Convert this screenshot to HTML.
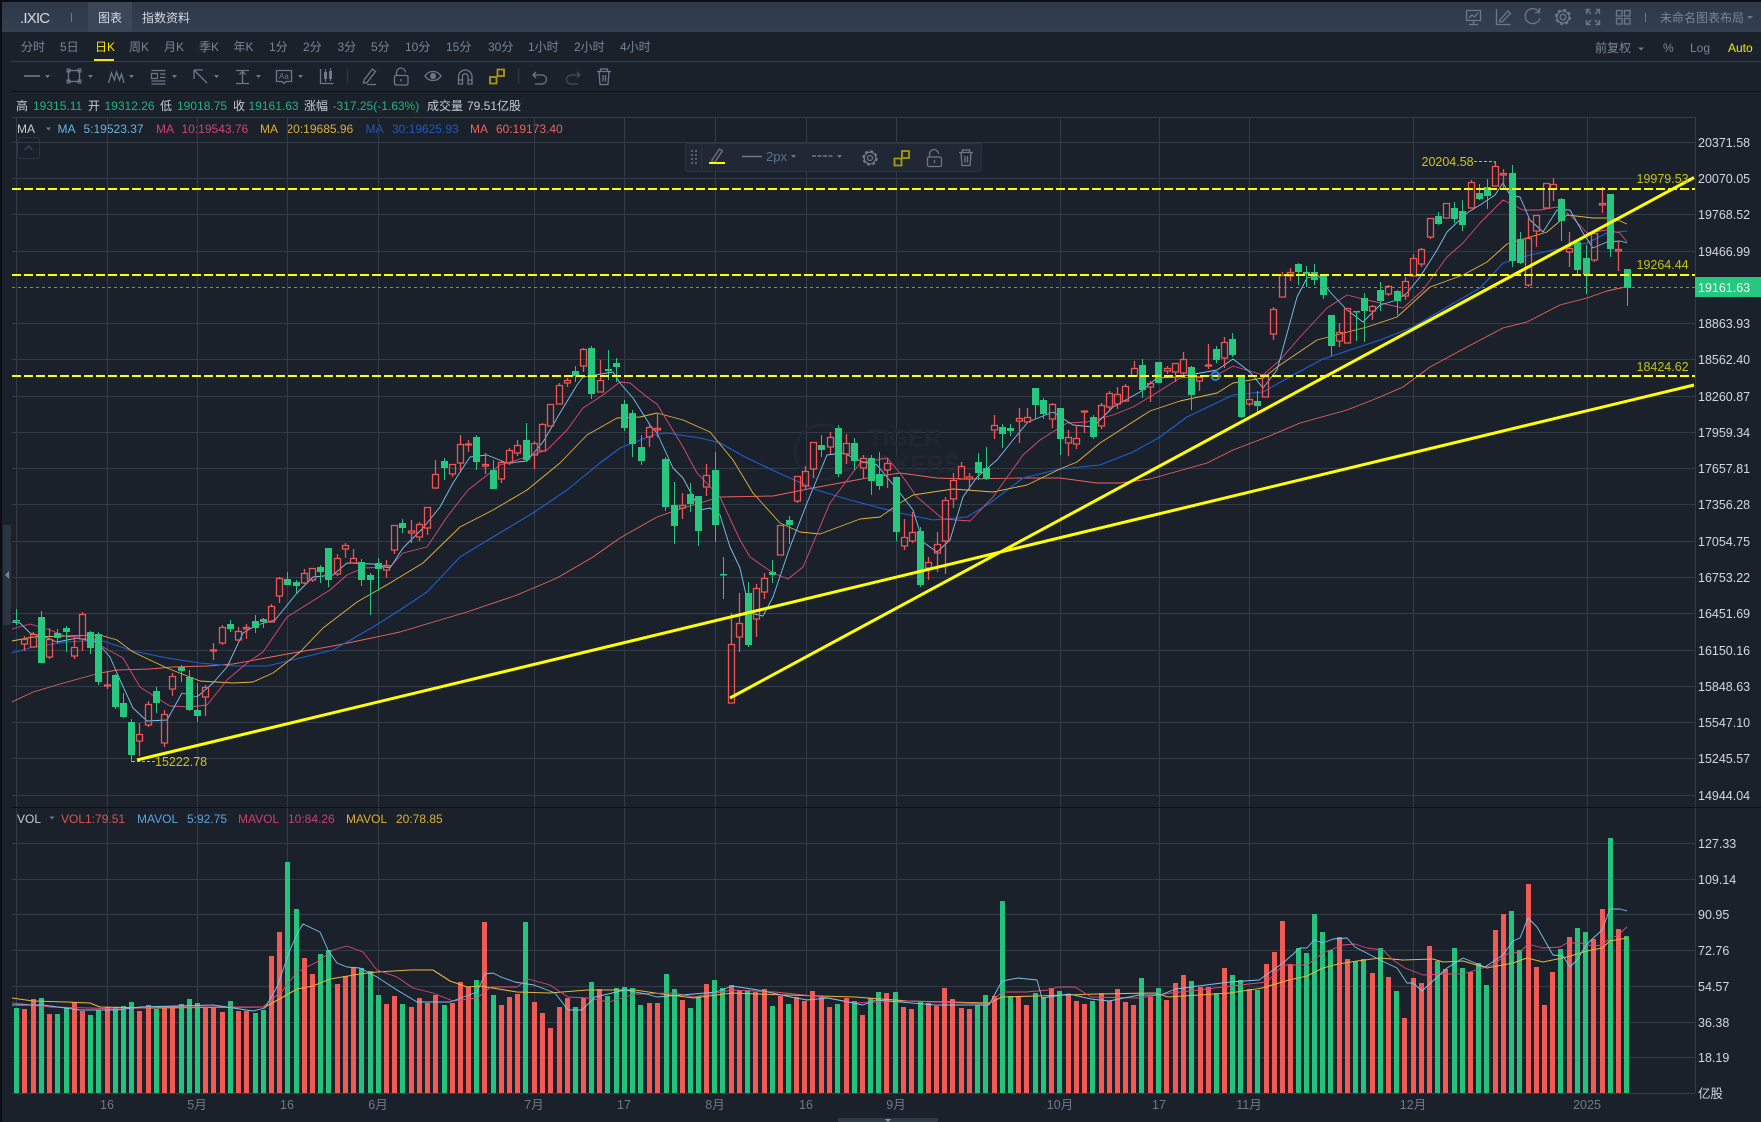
<!DOCTYPE html>
<html lang="zh"><head><meta charset="utf-8"><title>.IXIC</title>
<style>
html,body{margin:0;padding:0;background:#1a212b;overflow:hidden}
svg{display:block;font-family:"Liberation Sans","Noto Sans CJK SC",sans-serif;font-size:12px}
.n{fill:#7a8594}.a{fill:#c5ccd4;font-size:12.5px}.i{fill:#c5ccd4}.g{fill:#25b27a}
.x{fill:#6e7886;font-size:12.5px;text-anchor:middle}
.y{fill:#d0c21a;font-size:12.5px}
.ic{fill:none;stroke:#6d7887;stroke-width:1.3}
.c{fill:#6d7887}
</style></head><body>
<svg width="1761" height="1122" viewBox="0 0 1761 1122" xmlns="http://www.w3.org/2000/svg">
<defs><linearGradient id="hd" x1="0" y1="0" x2="0" y2="1"><stop offset="0" stop-color="#2d3848"/><stop offset="1" stop-color="#344051"/></linearGradient></defs>
<rect width="1761" height="1122" fill="#1a212b"/>
<!-- header -->
<rect x="0" y="2" width="1761" height="30" fill="url(#hd)"/>
<rect x="88" y="2" width="44" height="30" fill="#3b4658"/>
<rect width="1761" height="2" fill="#0b0e12"/>
<rect width="2" height="1122" fill="#0b0e12"/>
<text x="20" y="23" fill="#d5dae0" font-size="15" letter-spacing="-.8">.IXIC</text>
<path d="M71.5 13v9" stroke="#6d7887"/>
<text x="98" y="22" fill="#d5dae0">图表</text>
<text x="142" y="22" fill="#d5dae0">指数资料</text>
<!-- header right icons -->
<g class="ic">
<path d="M1466.5 10.5h14v10h-14zM1473.5 21v3M1469 24.500h9M1469 18l3-3 2.500 2 3.500-4"/>
<path d="M1496.500 9v15.500h14M1500 20l8-9 2.500 2.500-8 8-3 .5z"/>
<path d="M1539 12a7.500 7.500 0 1 0 1 6M1539.500 8v4.500h-4.500"/>
<circle cx="1563" cy="17" r="2.800"/><circle cx="1563" cy="17" r="6"/><circle cx="1563" cy="17" r="7.200" stroke-width="1.800" stroke-dasharray="3 2.650"/>
<path d="M1586.500 14v-4.500h4M1599.500 14v-4.500h-4M1586.500 20v4.500h4M1599.500 20v4.500h-4M1587 10l4 4M1599 10l-4 4M1587 24l4-4M1599 24l-4-4"/>
<path d="M1616.500 10.500h5.500v5.500h-5.500zM1624.500 10.500h5.500v5.500h-5.500zM1616.500 18.500h5.500v5.500h-5.500zM1624.500 18.500h5.500v5.500h-5.500z"/>
</g>
<path d="M1645.500 13v9" stroke="#6d7887"/>
<text x="1660" y="22" class="n">未命名图表布局</text>
<path class="c" d="M1747 16h6l-3 3z"/>
<!-- timeframes -->
<g class="n">
<text x="21" y="51">分时</text><text x="60" y="51">5日</text>
<text x="129" y="51">周K</text><text x="164" y="51">月K</text><text x="199" y="51">季K</text><text x="233.500" y="51">年K</text>
<text x="269" y="51">1分</text><text x="303" y="51">2分</text><text x="337.500" y="51">3分</text><text x="371" y="51">5分</text>
<text x="405" y="51">10分</text><text x="446" y="51">15分</text><text x="488" y="51">30分</text>
<text x="528" y="51">1小时</text><text x="574" y="51">2小时</text><text x="620" y="51">4小时</text>
<text x="1595" y="52">前复权</text><text x="1663" y="52">%</text><text x="1690" y="52">Log</text>
</g>
<text x="95" y="51" fill="#f5e60a">日K</text>
<rect x="94" y="59" width="20" height="2" fill="#f5e60a"/>
<text x="1728" y="52" fill="#f5e60a">Auto</text>
<path class="c" d="M1638 47.500h6l-3 3z"/>
<rect x="11" y="61" width="1750" height="1" fill="#323c49"/>
<rect x="11" y="91" width="1750" height="1" fill="#0d1218"/>
<!-- toolbar icons -->
<g class="ic">
<path d="M24 76h16" stroke-width="1.600"/>
<path d="M68.500 70.500h11v11h-11z"/><path d="M67 69h3v3h-3zM78 69h3v3h-3zM67 80h3v3h-3zM78 80h3v3h-3z" stroke-width="1"/>
<path d="M108.500 83l3-10 3 7 2-8 3 8 2-6 2.500 9"/>
<path d="M151.500 70.500h14M151.500 73.500v5h6v-5zM160 74h5.500M160 77.500h5.500M151.500 81h14M151.500 84h14" stroke-width="1.200"/>
<path d="M194 70l13 13M194 70h9M194 70v9"/>
<path d="M236 70.500h13M242.500 71v12M236 83.500h13M239.500 74.500l3-3 3 3"/>
<path d="M276.500 70.500h15v11h-5.500l-2 2-2-2h-5.500z"/>
<path d="M320.500 69v14.500h13"/>
<path d="M347.500 68v16M518.500 68v16" stroke="#2c3541"/>
<path d="M364 80l8.500-11 3 2.500-8.500 11-3.500.5zM367 84.500h9"/>
<rect x="394.500" y="75.500" width="13.500" height="9.500" rx="1.500"/><path d="M396.500 75.500v-3a4.500 4.500 0 0 1 9 0M401 79v2.500"/>
<path d="M425 76c4-6 12-6 16 0c-4 6-12 6-16 0z"/>
<path d="M458.500 84v-8a6.800 6.800 0 0 1 13.500 0v8h-4v-8a2.800 2.800 0 0 0-5.500 0v8zM458.500 80h4M468 80h4"/>
<path d="M536 72l-3 3 3 3M533 75h9a4.500 4.500 0 0 1 0 9h-7"/>
<path d="M577 72l3 3-3 3M580 75h-9a4.500 4.500 0 0 0 0 9h7" stroke="#444e5b"/>
<path d="M597 71.500h14M600.500 71v-2h7v2M599 71.500l1 13h8l1-13M603 75v6.500M605.500 75v6.500"/>
</g>
<path class="c" d="M324 72h3v7h-3zM329 71h3v8h-3zM325 69h1v13h-1zM330 68h1v13h-1z"/>
<circle class="c" cx="433" cy="76" r="3"/>
<text x="279" y="79" font-size="8" fill="#6d7887">Aa</text>
<path d="M497.500 69.500h6.500v6.500h-6.500zM490 77h6.500v6.500h-6.500z" fill="none" stroke="#a89c0c" stroke-width="1.800"/>
<path class="c" d="M45 75h5l-2.500 3zM88 75h5l-2.500 3zM129 75h5l-2.500 3zM172 75h5l-2.500 3zM214 75h5l-2.500 3zM256 75h5l-2.500 3zM298 75h5l-2.500 3z"/>
<!-- info rows -->
<g class="i"><text x="16" y="110">高</text><text x="88" y="110">开</text><text x="160" y="110">低</text><text x="233" y="110">收</text><text x="304" y="110">涨幅</text><text x="427" y="110">成交量</text><text x="467" y="110">79.51亿股</text><text x="17" y="133">MA</text></g>
<g class="g"><text x="33" y="110">19315.11</text><text x="104.500" y="110">19312.26</text><text x="177" y="110">19018.75</text><text x="248.500" y="110">19161.63</text><text x="332.500" y="110">-317.25(-1.63%)</text></g>
<path class="c" d="M46 127.500h5l-2.500 3z"/>
<text x="57.500" y="133" fill="#69b3e2">MA</text><text x="83.500" y="133" fill="#69b3e2">5:19523.37</text>
<text x="156" y="133" fill="#cf4272">MA</text><text x="181.500" y="133" fill="#cf4272">10:19543.76</text>
<text x="260" y="133" fill="#dcae38">MA</text><text x="286.500" y="133" fill="#dcae38">20:19685.96</text>
<text x="365.500" y="133" fill="#2058c0">MA</text><text x="392" y="133" fill="#2058c0">30:19625.93</text>
<text x="470" y="133" fill="#e9635c">MA</text><text x="496" y="133" fill="#e9635c">60:19173.40</text>
<!-- grid -->
<path fill="none" stroke="#323c49" d="M12 117.500H1695M12 142.500H1695M12 178.500H1695M12 214.500H1695M12 251.500H1695M12 323.500H1695M12 359.500H1695M12 396.500H1695M12 432.500H1695M12 468.500H1695M12 504.500H1695M12 541.500H1695M12 577.500H1695M12 613.500H1695M12 650.500H1695M12 686.500H1695M12 722.500H1695M12 758.500H1695M12 795.500H1695M12 843.500H1695M12 879.500H1695M12 914.500H1695M12 950.500H1695M12 986.500H1695M12 1022.500H1695M12 1057.500H1695M12 1093.500H1695M16.500 117V1093M107.500 117V1093M197.500 117V1093M287.500 117V1093M378.500 117V1093M534.500 117V1093M624.500 117V1093M715.500 117V1093M806.500 117V1093M896.500 117V1093M1060.500 117V1093M1159.500 117V1093M1249.500 117V1093M1413.500 117V1093M1587.500 117V1093M1695.500 117V1093"/>
<rect x="11" y="807" width="1750" height="1" fill="#0d1218"/>
<!-- left handle, collapse -->
<rect x="3" y="525" width="8" height="100" fill="#2b3440"/>
<path d="M9 571v8l-4-4z" fill="#7a8594"/>
<rect x="17.500" y="137.500" width="22" height="21" rx="3" fill="none" stroke="#2b3440"/>
<path d="M24.500 150l4-4 4 4" fill="none" stroke="#3d4755" stroke-width="1.300"/>
<!-- watermark -->
<circle cx="822" cy="452" r="27" fill="none" stroke="#1f2731" stroke-width="3"/>
<text x="868" y="446" font-size="24" font-weight="700" fill="#1f2731">TIGER</text>
<text x="840" y="472" font-size="24" font-weight="700" fill="#1f2731">BROKERS</text>
<!-- MA lines -->
<g fill="none" stroke-width=".9" stroke-linejoin="round">
<polyline stroke="#ee645c" points="12,702 33,692 67,682 100,673 117,670 150,669 173,667 207,666 233,664 260,659 293,653 333,646 367,639 400,632 430,623 467,612 517,595 557,578 593,557 620,538 657,517 683,508 720,497 773,496 813,488 867,478 900,473 937,478 967,479 1023,478 1060,478 1097,483 1120,483 1150,479 1207,463 1233,450 1267,437 1300,423 1347,410 1380,397 1403,387 1430,367 1467,347 1503,328 1527,322 1560,305 1587,298 1607,291 1625,287"/>
<polyline stroke="#1f5fd0" stroke-width="1.100" points="12,653 33,647 67,642 100,640 133,651 167,658 200,663 233,666 267,666 300,658 333,650 373,627 400,610 427,592 460,557 493,537 533,513 567,490 600,463 620,448 653,435 667,433 700,438 720,443 747,458 783,475 817,490 850,500 873,506 900,513 933,520 967,517 990,503 1023,478 1060,469 1100,465 1133,452 1160,437 1187,417 1233,395 1263,392 1293,375 1323,359 1380,340 1413,327 1447,307 1480,288 1503,263 1530,255 1563,248 1587,243 1607,233 1627,231"/>
<polyline stroke="#e8b33c" points="12,641 33,637 67,636 100,635 117,640 133,652 167,668 200,681 233,683 253,682 273,673 300,652 323,628 357,602 390,583 423,563 460,527 493,510 527,490 560,463 587,435 617,418 640,417 657,413 683,420 710,432 733,460 753,493 780,523 800,532 820,534 860,519 880,517 900,503 913,495 953,489 993,492 1027,485 1060,469 1077,462 1100,443 1150,411 1180,401 1217,393 1233,383 1263,378 1280,365 1317,340 1367,327 1397,317 1430,287 1463,275 1487,262 1507,244 1547,232 1567,215 1593,218 1613,218 1627,224"/>
<polyline stroke="#dc4a78" points="12,629 30,624 50,630 67,637 90,635 103,647 123,658 140,687 157,698 170,706 190,707 207,705 227,680 247,663 263,652 287,617 303,607 330,590 347,575 363,568 390,567 403,553 427,547 447,517 468,490 500,465 517,460 547,450 567,430 583,408 603,395 620,382 630,383 647,397 657,404 683,447 697,473 720,497 740,540 750,557 773,573 788,579 803,567 830,503 860,463 887,458 900,473 917,497 943,519 970,521 993,497 1023,455 1040,440 1067,423 1087,422 1113,415 1133,407 1153,395 1180,378 1217,375 1233,366 1263,375 1280,360 1300,337 1327,308 1347,295 1367,300 1403,308 1423,290 1447,257 1463,243 1480,223 1503,200 1523,210 1540,210 1557,207 1570,215 1587,233 1607,230 1620,233 1627,242"/>
<polyline stroke="#7cc4ee" points="12,622 20,623 30,633 47,638 57,642 77,638 97,642 110,657 120,680 133,708 147,721 167,720 182,693 197,697 213,683 227,667 243,633 257,625 275,620 297,593 313,577 333,575 347,563 373,564 390,568 403,548 423,528 440,507 453,483 470,457 487,455 507,463 527,461 543,442 560,413 577,385 583,377 613,372 620,383 633,398 650,425 657,433 673,468 683,478 700,510 710,508 720,515 730,547 740,568 750,613 763,616 773,597 790,547 807,503 827,455 843,453 863,462 877,465 900,493 913,510 923,542 937,552 950,540 963,497 977,477 997,460 1013,440 1028,422 1053,412 1073,425 1093,427 1113,407 1140,392 1157,378 1177,377 1200,373 1217,370 1233,359 1250,372 1263,388 1277,370 1288,330 1297,297 1307,278 1318,275 1330,292 1347,310 1363,322 1380,305 1397,300 1407,293 1420,277 1437,250 1447,232 1467,213 1480,205 1495,195 1503,183 1510,195 1520,197 1530,220 1543,232 1557,210 1570,210 1583,233 1593,248 1607,242 1620,241 1627,243"/>
</g>
<!-- green wicks -->
<path fill="none" stroke="#27c77f" stroke-width="1" d="M16.500 609V625M41.500 611V663M57.500 629V643M66.500 626V652M90.500 631V654M98.500 632V685M115.500 674V709M123.500 693V718M131.500 719V762M156.500 687V713M181.500 665V682M189.500 670V711M197.500 683V722M230.500 620V632M255.500 615V633M263.500 618V628M287.500 572V585M296.500 580V594M320.500 565V583M328.500 548V587M361.500 559V586M370.500 573V615M378.500 558V591M402.500 519V533M444.500 458V480M476.500 435V470M493.500 460V489M526.500 423V462M575.500 366V382M591.500 346V399M608.500 350V380M616.500 358V382M624.500 400V431M632.500 410V457M641.500 435V465M665.500 457V511M674.500 482V544M690.500 483V512M698.500 496V546M715.500 452V542M723.500 557V599M748.500 582V647M772.500 560V583M789.500 516V544M821.500 435V457M838.500 425V477M854.500 438V470M871.500 455V495M879.500 452V490M896.500 477V541M920.500 527V587M978.500 453V480M986.500 447V480M1002.500 424V448M1010.500 424V436M1035.500 388V419M1043.500 398V419M1060.500 408V455M1093.500 415V439M1142.500 359V398M1158.500 362V383M1191.500 366V410M1216.500 346V363M1232.500 333V357M1241.500 377V418M1257.500 391V412M1298.500 263V285M1306.500 266V287M1314.500 264V285M1323.500 276V299M1331.500 315V356M1356.500 311V341M1364.500 293V342M1380.500 282V311M1397.500 290V315M1438.500 212V225M1454.500 202V223M1462.500 200V231M1479.500 184V200M1487.500 179V209M1512.500 165V267M1520.500 232V264M1561.500 198V241M1577.500 242V274M1586.500 245V294M1610.500 194V257M1627.500 269V306"/>
<!-- green bodies -->
<path fill="none" stroke="#27c77f" stroke-width="7" d="M16.500 620V621.500M41.500 617V663M57.500 633V638M66.500 628V632M90.500 632V648M98.500 634V682M115.500 675V707M123.500 703V717M131.500 722V755M156.500 691V703M181.500 667V671M189.500 677V710M197.500 710V716M230.500 624V629M255.500 621V628M263.500 619V622M287.500 579V585M296.500 582V586M320.500 567V572M328.500 548V580M361.500 562V580M370.500 575V580M378.500 563V569M402.500 523V528M444.500 461V468M476.500 437V462M493.500 470V489M526.500 440V460M575.500 371V376M591.500 348V394M608.500 369V371M616.500 363V367M624.500 404V428M632.500 413V444M641.500 447V461M665.500 459V507M674.500 505V526M690.500 494V504M698.500 496V531M715.500 470V525M723.500 574V575.500M748.500 593V645M772.500 572V575M789.500 520V525M821.500 445V450M838.500 428V474M854.500 443V461M871.500 458V481M879.500 474V486M896.500 477V532M920.500 531V585M978.500 462V473M986.500 468V479M1002.500 427V434M1010.500 428V431M1035.500 388V405M1043.500 400V414M1060.500 408V439M1093.500 417V437M1142.500 365V390M1158.500 362V383M1191.500 367V395M1216.500 349V360M1232.500 339V355M1241.500 377V417M1257.500 401V406M1298.500 264V272M1306.500 272V274M1314.500 272V280M1323.500 276V295M1331.500 315V346M1356.500 311V312.500M1364.500 298V311M1380.500 290V301M1397.500 291V301M1438.500 216V224M1454.500 208V219M1462.500 211V225M1479.500 193V199M1487.500 187V196M1512.500 173V261M1520.500 239V263M1561.500 199V221M1577.500 242V270M1586.500 258V275M1610.500 194V249M1627.500 269V288"/>
<!-- red candles -->
<path fill="none" stroke="#f05555" stroke-width="1.300" d="M24.500 636V639M24.500 644V651M21.500 639.500h6v4.500h-6zM33.500 632V634M30.500 634.500h6v12.500h-6zM49.500 628V639M49.500 657V659M46.500 639.500h6v17.500h-6zM74.500 637V647M74.500 656V659M71.500 647.500h6v8.500h-6zM82.500 612V614M82.500 639V651M79.500 614.500h6v24.500h-6zM107.500 672V685M107.500 686V689M104.500 685h6v1h-6zM139.500 723V734M139.500 741V756M136.500 734.500h6v6.500h-6zM148.500 701V704M148.500 725V727M145.500 704.500h6v20.500h-6zM164.500 710V714M164.500 743V747M161.500 714.500h6v28.500h-6zM172.500 673V676M172.500 689V696M169.500 676.500h6v12.500h-6zM205.500 685V687M205.500 697V716M202.500 687.500h6v9.500h-6zM213.500 643V650M213.500 651V660M210.500 650h6v1h-6zM222.500 625V627M222.500 643V645M219.500 627.500h6v15.500h-6zM238.500 627V631M238.500 640V641M235.500 631.500h6v8.500h-6zM246.500 624V627M246.500 629V639M243.500 627.500h6v1.500h-6zM271.500 604V606M268.500 606.500h6v15.500h-6zM279.500 577V578M279.500 596V603M276.500 578.500h6v17.500h-6zM304.500 569V573M304.500 583V584M301.500 573.500h6v9.500h-6zM309.500 568.500h6v11.500h-6zM312.500 580V582M337.500 554V558M337.500 574V576M334.500 558.500h6v15.500h-6zM345.500 543V545M345.500 549V558M342.500 545.500h6v3.500h-6zM353.500 549V558M350.500 558.500h6v4.500h-6zM386.500 560V565M386.500 570V578M383.500 565.500h6v4.500h-6zM391.500 525.500h6v24.500h-6zM394.500 550V554M411.500 520V531M411.500 533V543M408.500 531h6v2h-6zM419.500 522V524M419.500 537V541M416.500 524.500h6v12.500h-6zM424.500 507.500h6v20.500h-6zM427.500 528V535M435.500 460V474M435.500 488V489M432.500 474.500h6v13.500h-6zM449.500 464.500h6v9.500h-6zM452.500 474V477M460.500 435V444M460.500 463V471M457.500 444.500h6v18.500h-6zM468.500 440V444M468.500 445V452M465.500 444h6v1h-6zM485.500 453V464M485.500 466V474M482.500 464.500h6v1.500h-6zM501.500 460V462M501.500 479V483M498.500 462.500h6v16.500h-6zM509.500 448V450M509.500 463V465M506.500 450.500h6v12.500h-6zM517.500 440V445M517.500 453V456M514.500 445.500h6v7.500h-6zM534.500 441V443M534.500 455V469M531.500 443.500h6v11.500h-6zM542.500 423V424M542.500 451V452M539.500 424.500h6v26.500h-6zM547.500 404.500h6v21.500h-6zM559.500 383V385M556.500 385.500h6v18.500h-6zM567.500 378V380M567.500 383V387M564.500 380.500h6v2.500h-6zM583.500 348V349M583.500 366V372M580.500 349.500h6v16.500h-6zM600.500 360V380M597.500 380.500h6v11.500h-6zM649.500 423V427M649.500 437V447M646.500 427.500h6v9.500h-6zM657.500 413V428M657.500 430V437M654.500 428.500h6v1.500h-6zM682.500 493V505M682.500 508V519M679.500 505.500h6v2.500h-6zM706.500 464V475M706.500 487V496M703.500 475.500h6v11.500h-6zM731.500 613V644M728.500 644.500h6v58.500h-6zM739.500 593V623M739.500 637V652M736.500 623.500h6v13.500h-6zM756.500 584V588M756.500 619V637M753.500 588.500h6v30.500h-6zM764.500 573V578M764.500 592V599M761.500 578.500h6v13.500h-6zM777.500 525.500h6v29.500h-6zM794.500 476.500h6v24.500h-6zM797.500 501V503M805.500 466V471M805.500 486V490M802.500 471.500h6v14.500h-6zM810.500 442.500h6v26.500h-6zM813.500 469V478M830.500 432V437M830.500 447V454M827.500 437.500h6v9.500h-6zM846.500 434V443M846.500 454V464M843.500 443.500h6v10.500h-6zM863.500 455V458M863.500 468V479M860.500 458.500h6v9.500h-6zM887.500 458V463M887.500 470V488M884.500 463.500h6v6.500h-6zM904.500 519V537M904.500 546V550M901.500 537.500h6v8.500h-6zM912.500 512V532M912.500 541V543M909.500 532.500h6v8.500h-6zM928.500 557V562M928.500 568V580M925.500 562.500h6v5.500h-6zM937.500 532V544M937.500 553V572M934.500 544.500h6v8.500h-6zM945.500 497V500M945.500 541V574M942.500 500.500h6v40.500h-6zM953.500 473V480M953.500 499V508M950.500 480.500h6v18.500h-6zM961.500 462V466M958.500 466.500h6v12.500h-6zM969.500 473V477M969.500 479V490M966.500 477h6v2h-6zM994.500 415V425M994.500 430V439M991.500 425.500h6v4.500h-6zM1019.500 408V418M1019.500 421V443M1016.500 418.500h6v2.500h-6zM1027.500 408V417M1024.500 417.500h6v4.500h-6zM1052.500 403V404M1052.500 419V428M1049.500 404.500h6v14.500h-6zM1068.500 430V437M1068.500 443V456M1065.500 437.500h6v5.500h-6zM1076.500 425V438M1076.500 444V449M1073.500 438.500h6v5.500h-6zM1084.500 412V433M1081.500 411h6v1h-6zM1101.500 403V405M1101.500 426V429M1098.500 405.500h6v20.500h-6zM1109.500 391V393M1109.500 407V412M1106.500 393.500h6v13.500h-6zM1117.500 387V394M1117.500 404V409M1114.500 394.500h6v9.500h-6zM1125.500 384V386M1125.500 401V402M1122.500 386.500h6v14.500h-6zM1134.500 361V368M1131.500 368.500h6v7.500h-6zM1150.500 381V383M1150.500 387V402M1147.500 383.500h6v3.500h-6zM1167.500 366V368M1167.500 371V374M1164.500 368.500h6v2.500h-6zM1172.500 363.500h6v8.500h-6zM1175.500 372V382M1183.500 352V359M1183.500 373V377M1180.500 359.500h6v13.500h-6zM1196.500 377.500h6v3.500h-6zM1199.500 381V391M1208.500 344V365M1208.500 366V369M1205.500 365h6v1h-6zM1224.500 337V342M1224.500 358V368M1221.500 342.500h6v15.500h-6zM1249.500 383V399M1249.500 404V406M1246.500 399.500h6v4.500h-6zM1265.500 374V375M1262.500 375.500h6v21.500h-6zM1273.500 307V309M1273.500 334V340M1270.500 309.500h6v24.500h-6zM1282.500 272V275M1279.500 275.500h6v21.500h-6zM1290.500 268V272M1290.500 276V281M1287.500 272.500h6v3.500h-6zM1339.500 323V332M1339.500 341V347M1336.500 332.500h6v8.500h-6zM1344.500 308.500h6v34.500h-6zM1372.500 305V306M1372.500 311V320M1369.500 306.500h6v4.500h-6zM1388.500 285V286M1388.500 294V296M1385.500 286.500h6v7.500h-6zM1405.500 277V281M1405.500 296V300M1402.500 281.500h6v14.500h-6zM1413.500 254V258M1410.500 258.500h6v17.500h-6zM1421.500 248V249M1421.500 264V267M1418.500 249.500h6v14.500h-6zM1427.500 218.500h6v18.500h-6zM1430.500 237V239M1443.500 203.500h6v14.500h-6zM1471.500 180V182M1468.500 182.500h6v25.500h-6zM1495.500 162V166M1492.500 166.500h6v19.500h-6zM1503.500 169V173M1503.500 175V190M1500.500 173.500h6v1.500h-6zM1528.500 217V238M1528.500 285V287M1525.500 238.500h6v46.500h-6zM1533.500 215.500h6v15.500h-6zM1536.500 231V247M1543.500 183.500h6v24.500h-6zM1553.500 178V184M1553.500 189V201M1550.500 184.500h6v4.500h-6zM1569.500 232V248M1569.500 252V267M1566.500 248.500h6v3.500h-6zM1591.500 233.500h6v26.500h-6zM1594.500 260V262M1602.500 187V203M1602.500 205V213M1599.500 203.500h6v1.500h-6zM1618.500 241V249M1618.500 251V271M1615.500 249.500h6v1.500h-6z"/>
<!-- horizontal drawings -->
<path d="M12 287.500H1695" stroke="#2fae7c" stroke-dasharray="3 3"/>
<path d="M12 189H1695M12 275H1695M12 376H1695" stroke="#ffff00" stroke-width="2" stroke-dasharray="9 3"/>
<path d="M137 760L1694 385M730 698L1694 177.500" stroke="#ffff00" stroke-width="3" fill="none"/>
<circle cx="1215.500" cy="376" r="4" fill="none" stroke="#2f80d0" stroke-width="2"/>
<path d="M1474 161.500H1495V166M132 761.500H155" stroke="#d0c21a" stroke-dasharray="3 2" fill="none"/>
<text x="1421.500" y="166" class="y">20204.58</text>
<text x="155" y="766" class="y">15222.78</text>
<text x="1636.500" y="183" class="y" style="fill:#c2c21a">19979.53</text>
<text x="1636.500" y="269" class="y" style="fill:#c2c21a">19264.44</text>
<text x="1636.500" y="371" class="y" style="fill:#c2c21a">18424.62</text>
<!-- floating toolbar -->
<rect x="685.500" y="143.500" width="296" height="28" rx="2" fill="#1f2833" stroke="#2a3340"/>
<path d="M701.500 144v27" stroke="#2a3340"/>
<path fill="#566170" d="M691 150h2v2h-2zM695 150h2v2h-2zM691 154h2v2h-2zM695 154h2v2h-2zM691 158h2v2h-2zM695 158h2v2h-2zM691 162h2v2h-2zM695 162h2v2h-2z"/>
<g class="ic" stroke="#6d7887">
<path d="M712 160l7.500-11 2.800 2-7.500 11-3 .5z"/>
<path d="M742 156.500h20" stroke-width="1.600"/>
<path d="M812 156h22" stroke-dasharray="4 1.500" stroke-width="1.500"/>
<circle cx="870" cy="158" r="2.500"/><circle cx="870" cy="158" r="5.800"/><circle cx="870" cy="158" r="7" stroke-width="1.600" stroke-dasharray="3 2.500"/>
<rect x="927.500" y="157" width="14" height="9.500" rx="1.500"/><path d="M929.500 157v-3a4.500 4.500 0 0 1 9 0M934.500 160v3"/>
<path d="M959 152.500h14M962.500 152v-2h7v2M961 152.500l1 13h8l1-13M965 156v6.500M967.500 156v6.500"/>
</g>
<rect x="709" y="162" width="16" height="2" fill="#ffff00"/>
<text x="766" y="161" font-size="13" fill="#5a7090">2px</text>
<path class="c" d="M791 155h5l-2.500 3zM837 155h5l-2.500 3z"/>
<path d="M902 151h7v7h-7zM894.500 158.500h7v7h-7z" fill="none" stroke="#a89c0c" stroke-width="1.800"/>
<!-- price tag + axis -->
<rect x="1695" y="277" width="66" height="20" fill="#26c77f"/>
<g fill="#d2d7de" font-size="12.500">
<text x="1698" y="147">20371.58</text><text x="1698" y="183">20070.05</text><text x="1698" y="219">19768.52</text><text x="1698" y="256">19466.99</text>
<text x="1698" y="292" fill="#f2fff8">19161.63</text>
<text x="1698" y="328">18863.93</text><text x="1698" y="364">18562.40</text><text x="1698" y="401">18260.87</text><text x="1698" y="437">17959.34</text><text x="1698" y="473">17657.81</text><text x="1698" y="509">17356.28</text><text x="1698" y="546">17054.75</text><text x="1698" y="582">16753.22</text><text x="1698" y="618">16451.69</text><text x="1698" y="655">16150.16</text><text x="1698" y="691">15848.63</text><text x="1698" y="727">15547.10</text><text x="1698" y="763">15245.57</text><text x="1698" y="800">14944.04</text>
<text x="1698" y="848">127.33</text><text x="1698" y="884">109.14</text><text x="1698" y="919">90.95</text><text x="1698" y="955">72.76</text><text x="1698" y="991">54.57</text><text x="1698" y="1027">36.38</text><text x="1698" y="1062">18.19</text><text x="1698" y="1098">亿股</text>
</g>
<!-- vol legend -->
<text x="17" y="823" class="i">VOL</text>
<path class="c" d="M49.500 816.500h5l-2.500 3z"/>
<text x="61" y="823" fill="#d9584f">VOL1:79.51</text>
<text x="137" y="823" fill="#5aa6dc">MAVOL</text><text x="187" y="823" fill="#5aa6dc">5:92.75</text>
<text x="238" y="823" fill="#c8406c">MAVOL</text><text x="288" y="823" fill="#c8406c">10:84.26</text>
<text x="346" y="823" fill="#dcae38">MAVOL</text><text x="396" y="823" fill="#dcae38">20:78.85</text>
<!-- volume bars -->
<path fill="none" stroke="#24c27c" stroke-width="5" d="M16.500 1008V1093M41.500 998V1093M57.500 1014V1093M66.500 1007V1093M90.500 1015V1093M98.500 1010V1093M115.500 1007V1093M123.500 1006V1093M131.500 1002V1093M156.500 1009V1093M181.500 1004V1093M189.500 999V1093M197.500 1003V1093M230.500 1001V1093M255.500 1013V1093M263.500 1010V1093M287.500 862V1093M296.500 909V1093M320.500 954V1093M328.500 950V1093M361.500 968V1093M370.500 971V1093M378.500 995V1093M402.500 1004V1093M444.500 1005V1093M476.500 980V1093M493.500 995V1093M525.500 922V1093M575.500 1007V1093M591.500 982V1093M607.500 996V1093M616.500 988V1093M624.500 987V1093M632.500 988V1093M640.500 1005V1093M666.500 974V1093M674.500 989V1093M690.500 1008V1093M698.500 996V1093M714.500 980V1093M722.500 988V1093M747.500 990V1093M772.500 1006V1093M788.500 1004V1093M837.500 1004V1093M854.500 1001V1093M870.500 998V1093M878.500 992V1093M895.500 992V1093M920.500 1001V1093M977.500 1005V1093M985.500 995V1093M1002.500 901V1093M1010.500 996V1093M1035.500 993V1093M1043.500 997V1093M1059.500 991V1093M1092.500 1001V1093M1141.500 978V1093M1158.500 988V1093M1191.500 981V1093M1216.500 993V1093M1232.500 975V1093M1240.500 980V1093M1257.500 990V1093M1298.500 948V1093M1306.500 953V1093M1314.500 914V1093M1322.500 932V1093M1330.500 950V1093M1355.500 961V1093M1363.500 959V1093M1380.500 948V1093M1396.500 991V1093M1437.500 961V1093M1454.500 948V1093M1462.500 968V1093M1478.500 963V1093M1486.500 985V1093M1511.500 911V1093M1519.500 950V1093M1560.500 949V1093M1577.500 928V1093M1585.500 932V1093M1610.500 838V1093M1626.500 936V1093"/>
<path fill="none" stroke="#f25a55" stroke-width="5" d="M24.500 1009V1093M33.500 999V1093M49.500 1014V1093M74.500 1002V1093M82.500 1011V1093M107.500 1007V1093M139.500 1011V1093M148.500 1005V1093M164.500 1008V1093M172.500 1008V1093M205.500 1007V1093M213.500 1007V1093M222.500 1012V1093M238.500 1011V1093M246.500 1011V1093M271.500 956V1093M279.500 932V1093M304.500 958V1093M312.500 974V1093M337.500 984V1093M345.500 976V1093M353.500 968V1093M386.500 1004V1093M394.500 996V1093M411.500 1007V1093M419.500 998V1093M427.500 1003V1093M435.500 995V1093M452.500 1003V1093M460.500 982V1093M468.500 987V1093M484.500 922V1093M501.500 1005V1093M509.500 997V1093M517.500 994V1093M534.500 1002V1093M542.500 1013V1093M550.500 1028V1093M559.500 1007V1093M567.500 998V1093M583.500 998V1093M599.500 989V1093M649.500 1003V1093M657.500 1003V1093M682.500 1000V1093M706.500 984V1093M731.500 985V1093M739.500 990V1093M755.500 992V1093M764.500 989V1093M780.500 996V1093M796.500 997V1093M804.500 1001V1093M812.500 991V1093M821.500 996V1093M829.500 1007V1093M846.500 998V1093M862.500 1015V1093M886.500 993V1093M903.500 1007V1093M911.500 1009V1093M928.500 1003V1093M936.500 1006V1093M944.500 988V1093M952.500 999V1093M961.500 1008V1093M969.500 1009V1093M994.500 996V1093M1018.500 996V1093M1026.500 1005V1093M1051.500 988V1093M1068.500 995V1093M1076.500 1001V1093M1084.500 1004V1093M1101.500 993V1093M1109.500 1001V1093M1117.500 989V1093M1125.500 1002V1093M1133.500 1005V1093M1150.500 997V1093M1166.500 1000V1093M1175.500 983V1093M1183.500 975V1093M1200.500 987V1093M1208.500 987V1093M1224.500 968V1093M1249.500 989V1093M1266.500 964V1093M1274.500 952V1093M1282.500 921V1093M1290.500 964V1093M1339.500 937V1093M1347.500 959V1093M1372.500 973V1093M1388.500 977V1093M1404.500 1018V1093M1413.500 978V1093M1421.500 983V1093M1429.500 946V1093M1445.500 969V1093M1470.500 972V1093M1495.500 930V1093M1503.500 914V1093M1528.500 884V1093M1536.500 967V1093M1544.500 1005V1093M1552.500 972V1093M1569.500 937V1093M1593.500 939V1093M1602.500 909V1093M1618.500 929V1093"/>
<!-- volume MA lines -->
<g fill="none" stroke-width=".9" stroke-linejoin="round">
<polyline stroke="#e8b33c" stroke-width="1.100" points="12,998 33,1001 67,1002 90,1003 100,1007 150,1008 265,1007 283,997 297,989 313,986 330,979 360,974 377,972 410,970 433,970 450,981 467,987 480,986 517,992 550,993 587,990 635,990 662,994 694,998 732,993 785,995 855,997 908,1001 989,1003 1002,997 1037,996 1096,994 1155,993 1168,997 1230,993 1262,988 1289,980 1307,976 1323,968 1338,964 1357,961 1380,958 1403,960 1433,959 1443,962 1463,961 1487,968 1513,963 1527,958 1543,962 1567,957 1587,951 1602,948 1610,941 1627,938"/>
<polyline stroke="#dc4a78" points="12,1003 50,1007 90,1008 117,1009 167,1007 263,1007 283,990 297,972 317,962 333,950 347,946 363,952 377,970 397,977 413,988 433,993 453,1001 477,998 491,987 517,987 528,979 550,985 568,997 587,998 609,1002 635,994 673,993 694,997 732,990 775,992 823,997 855,1003 908,1001 989,1004 1002,992 1026,992 1048,990 1058,987 1075,987 1091,997 1139,998 1171,993 1198,990 1240,985 1267,982 1283,965 1307,965 1323,953 1343,945 1355,944 1367,948 1383,950 1393,960 1405,968 1423,975 1443,974 1463,974 1493,965 1507,954 1520,952 1528,944 1543,948 1560,947 1567,943 1580,943 1593,946 1602,945 1610,938 1617,936 1627,927"/>
<polyline stroke="#7cc4ee" points="12,1005 43,1005 80,1010 117,1010 140,1007 213,1005 227,1007 253,1011 265,1008 277,987 290,950 298,932 303,924 320,932 328,950 337,963 347,967 360,968 377,977 397,990 417,1002 450,1002 477,992 485,974 493,973 501,977 515,982 534,985 555,993 568,1010 582,1010 595,997 625,990 646,994 657,997 694,994 716,992 732,986 758,990 791,997 807,1000 828,998 863,1005 876,1000 935,1005 989,1005 1002,981 1018,978 1037,980 1042,998 1069,994 1091,999 1109,1001 1139,995 1160,995 1176,989 1198,986 1230,982 1259,980 1283,963 1300,948 1307,948 1314,940 1323,943 1333,939 1347,938 1355,947 1380,960 1397,968 1407,983 1413,983 1422,991 1447,968 1463,958 1485,967 1503,955 1513,941 1520,938 1528,918 1537,927 1553,955 1563,956 1570,967 1577,960 1587,944 1602,930 1610,909 1620,909 1627,911"/>
</g>
<!-- x axis -->
<text x="107" y="1109" class="x">16</text><text x="197" y="1109" class="x">5月</text><text x="287" y="1109" class="x">16</text><text x="378" y="1109" class="x">6月</text><text x="534" y="1109" class="x">7月</text><text x="624" y="1109" class="x">17</text><text x="715" y="1109" class="x">8月</text><text x="806" y="1109" class="x">16</text><text x="896" y="1109" class="x">9月</text><text x="1060" y="1109" class="x">10月</text><text x="1159" y="1109" class="x">17</text><text x="1249" y="1109" class="x">11月</text><text x="1413" y="1109" class="x">12月</text><text x="1587" y="1109" class="x">2025</text>
<rect x="838" y="1118" width="100" height="4" fill="#303a47"/>
<path d="M885 1119h6l-3 3z" fill="#8a94a1"/>
</svg>
</body></html>
